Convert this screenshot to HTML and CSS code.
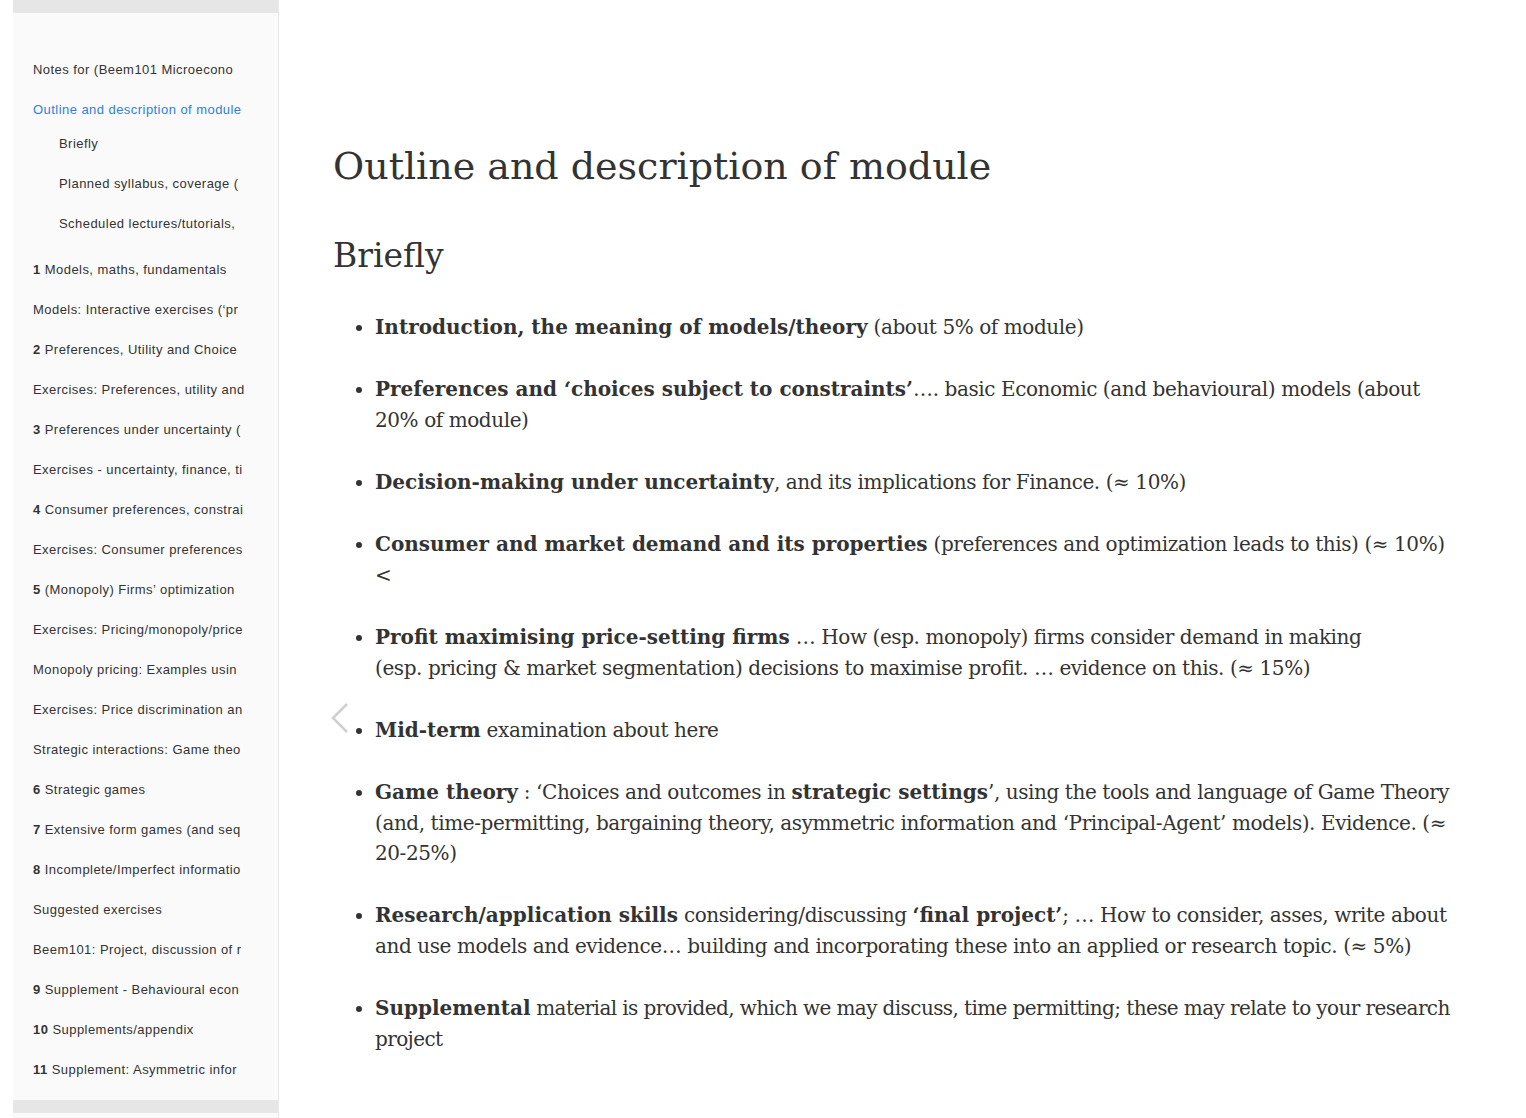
FILE: index.html
```html
<!DOCTYPE html>
<html lang="en">
<head>
<meta charset="utf-8">
<title>Outline and description of module</title>
<link rel="stylesheet" href="styles.css">
</head>
<body>
<div class="book">
  <nav class="sidebar">
    <div class="sidebar-bar"></div>
    <ul class="summary">
      <li><a>Notes for (Beem101 Microecono</a></li>
      <li class="active"><a>Outline and description of module</a>
        <ul class="articles">
          <li><a>Briefly</a></li>
          <li><a>Planned syllabus, coverage (</a></li>
          <li><a>Scheduled lectures/tutorials,</a></li>
        </ul>
      </li>
      <li><a><b>1</b> Models, maths, fundamentals</a></li>
      <li><a>Models: Interactive exercises (‘pr</a></li>
      <li><a><b>2</b> Preferences, Utility and Choice</a></li>
      <li><a>Exercises: Preferences, utility and</a></li>
      <li><a><b>3</b> Preferences under uncertainty (</a></li>
      <li><a>Exercises - uncertainty, finance, ti</a></li>
      <li><a><b>4</b> Consumer preferences, constrai</a></li>
      <li><a>Exercises: Consumer preferences</a></li>
      <li><a><b>5</b> (Monopoly) Firms’ optimization</a></li>
      <li><a>Exercises: Pricing/monopoly/price</a></li>
      <li><a>Monopoly pricing: Examples usin</a></li>
      <li><a>Exercises: Price discrimination an</a></li>
      <li><a>Strategic interactions: Game theo</a></li>
      <li><a><b>6</b> Strategic games</a></li>
      <li><a><b>7</b> Extensive form games (and seq</a></li>
      <li><a><b>8</b> Incomplete/Imperfect informatio</a></li>
      <li><a>Suggested exercises</a></li>
      <li><a>Beem101: Project, discussion of r</a></li>
      <li><a><b>9</b> Supplement - Behavioural econ</a></li>
      <li><a><b>10</b> Supplements/appendix</a></li>
      <li><a><b>11</b> Supplement: Asymmetric infor</a></li>
    </ul>
    <div class="sidebar-bar bottom"></div>
  </nav>
  <main class="page">
    <a class="nav-prev" aria-label="Previous page">
      <svg width="20" height="32" viewBox="0 0 20 32"><polyline points="17,2 3,16 17,30" fill="none" stroke="#cfcfcf" stroke-width="2.6"/></svg>
    </a>
    <section class="content">
      <h1>Outline and description of module</h1>
      <h2>Briefly</h2>
      <ul class="points">
        <li><b>Introduction, the meaning of models/theory</b> (about 5% of module)</li>
        <li><b>Preferences and ‘choices subject to constraints’</b>…. basic Economic (and behavioural) models (about 20% of module)</li>
        <li><b>Decision-making under uncertainty</b>, and its implications for Finance. (≈ 10%)</li>
        <li><b>Consumer and market demand and its properties</b> (preferences and optimization leads to this) (≈ 10%) &lt;</li>
        <li><b>Profit maximising price-setting firms</b> … How (esp.&nbsp;monopoly) firms consider demand in making (esp.&nbsp;pricing &amp; market segmentation) decisions to maximise profit. … evidence on this. (≈ 15%)</li>
        <li><b>Mid-term</b> examination about here</li>
        <li><b>Game theory</b> : ‘Choices and outcomes in <b>strategic settings</b>’, using the tools and language of Game Theory (and, time-permitting, bargaining theory, asymmetric information and ‘Principal-Agent’ models). Evidence. (≈ 20-25%)</li>
        <li><b>Research/application skills</b> considering/discussing <b>‘final project’</b>; … How to consider, asses, write about and use models and evidence… building and incorporating these into an applied or research topic. (≈ 5%)</li>
        <li class="tight"><b>Supplemental</b> material is provided, which we may discuss, time permitting; these may relate to your research project</li>
      </ul>
    </section>
  </main>
</div>
</body>
</html>
```

FILE: styles.css
```css
html, body {
  margin: 0;
  padding: 0;
  background: #ffffff;
}

.book {
  display: flex;
  align-items: flex-start;
  padding-left: 13px;
  min-height: 1118px;
}

.sidebar {
  flex: 0 0 266px;
  width: 266px;
  height: 1118px;
  background: #fafafa;
  border-right: 1px solid #e8e8e8;
  box-sizing: border-box;
  display: flex;
  flex-direction: column;
  overflow: hidden;
  font-family: "Liberation Sans", Arial, sans-serif;
  font-size: 13px;
  letter-spacing: 0.45px;
  color: #333333;
}

.sidebar-bar {
  height: 13px;
  background: #e6e6e6;
  flex: 0 0 13px;
}

.sidebar-bar.bottom {
  margin-top: 10px;
}

.summary {
  list-style: none;
  margin: 0;
  padding: 37px 0 0 0;
}

.summary li a {
  display: block;
  padding: 10px 10px 10px 20px;
  line-height: 20px;
  white-space: nowrap;
  overflow: hidden;
  color: #333333;
}

.summary li.active > a {
  color: #2f7fe0;
}

.summary b {
  font-weight: bold;
}

.articles {
  list-style: none;
  margin: -6px 0 6px 0;
  padding: 0 0 0 26px;
}

.page {
  position: relative;
  flex: 1 1 auto;
  padding: 0 60px 0 54px;
  color: #333333;
  font-family: "DejaVu Serif", Georgia, serif;
}

.nav-prev {
  position: absolute;
  left: 51px;
  top: 702px;
  display: block;
  width: 20px;
  height: 32px;
}

.nav-prev svg {
  display: block;
}

.content {
  max-width: 1127px;
}

h1 {
  font-weight: normal;
  font-size: 38px;
  line-height: 48px;
  margin: 142px 0 0 0;
}

h2 {
  font-weight: normal;
  font-size: 33px;
  line-height: 44px;
  margin: 44px 0 0 0;
}

.points {
  margin: 34px 0 0 0;
  padding: 0 0 0 42px;
  font-size: 20px;
  line-height: 30.6px;
  letter-spacing: -0.42px;
}

.points li {
  margin: 0 0 31.6px 0;
}

.points li.tight {
  letter-spacing: -0.6px;
}

.points b {
  font-weight: bold;
  letter-spacing: 0;
}
```
